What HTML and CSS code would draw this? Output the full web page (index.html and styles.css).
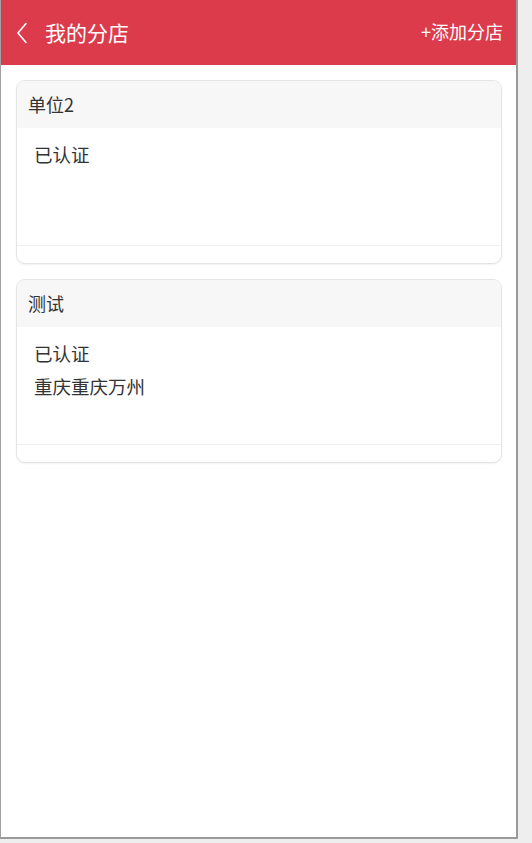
FILE: index.html
```html
<!DOCTYPE html>
<html lang="zh-CN">
<head>
<meta charset="utf-8">
<title>我的分店</title>
<link rel="stylesheet" href="styles.css">
</head>
<body>
<div class="device">
  <header class="topbar">
    <div class="topbar-left">
      <svg class="back" width="12" height="22" viewBox="0 0 12 22" aria-hidden="true">
        <path d="M10 1.5 L2 11 L10 20.5" fill="none" stroke="#fff" stroke-width="1.6" stroke-linecap="round" stroke-linejoin="round"/>
      </svg>
      <span class="title">我的分店</span>
    </div>
    <span class="action">+添加分店</span>
  </header>
  <main class="list">
    <section class="card">
      <div class="card-head">单位2</div>
      <div class="card-body">
        <p class="line">已认证</p>
      </div>
      <div class="card-foot"></div>
    </section>
    <section class="card">
      <div class="card-head">测试</div>
      <div class="card-body">
        <p class="line">已认证</p>
        <p class="line">重庆重庆万州</p>
      </div>
      <div class="card-foot"></div>
    </section>
  </main>
</div>
</body>
</html>
```
FILE: styles.css
```css
html, body {
  margin: 0;
  padding: 0;
  background: #eeeeee;
}
body {
  font-family: "Noto Sans CJK SC", "Noto Sans", sans-serif;
  color: #333;
}
.device {
  box-sizing: border-box;
  width: 518px;
  height: 839px;
  background: #fff;
  border-left: 1px solid #a0a0a0;
  border-right: 2px solid #9a9a9a;
  border-bottom: 2px solid #9a9a9a;
  display: flex;
  flex-direction: column;
}
.topbar {
  height: 65px;
  flex: none;
  background: #dc3b4b;
  color: #fff;
  display: flex;
  align-items: center;
  justify-content: space-between;
  padding: 0 13px 0 15px;
}
.topbar-left {
  display: flex;
  align-items: center;
}
.back {
  display: block;
  margin-right: 17px;
}
.title {
  font-size: 21px;
  line-height: 1;
  margin-top: -1px;
}
.action {
  font-size: 18px;
  line-height: 1;
  margin-top: -3px;
}
.list {
  padding: 15px 14px 0 15px;
  display: flex;
  flex-direction: column;
  gap: 15px;
}
.card {
  border: 1px solid #e4e4e4;
  border-radius: 9px;
  overflow: hidden;
  box-shadow: 0 1px 2px rgba(0, 0, 0, 0.06);
  background: #fff;
}
.card-head {
  height: 47px;
  background: #f7f7f7;
  font-size: 18px;
  line-height: 47px;
  padding-left: 11px;
  color: #333;
}
.card-body {
  box-sizing: border-box;
  height: 117px;
  padding: 10px 0 0 17px;
}
.line {
  margin: 0;
  font-size: 18.5px;
  line-height: 33px;
  color: #333;
}
.card-foot {
  height: 17px;
  border-top: 1px solid #efefef;
}
```
